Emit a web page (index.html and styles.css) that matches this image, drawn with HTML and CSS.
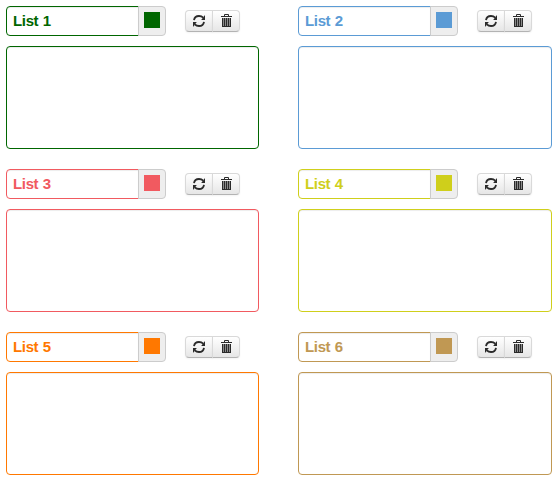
FILE: index.html
```
<!DOCTYPE html>
<html lang="en">
<head>
<meta charset="utf-8">
<title>Lists</title>
<link rel="stylesheet" href="styles.css">
</head>
<body>
<svg class="defs" width="0" height="0" aria-hidden="true">
  <symbol id="refresh" viewBox="0 0 14 14">
    <path d="M2 6.2C2.4 3.6 4.4 2 7 2c1.7 0 3 .5 4.2 1.7M12 7.8c-.4 2.6-2.4 4.2-5 4.2-1.7 0-3-.5-4.2-1.7" fill="none" stroke="#2a2a2a" stroke-width="1.8"/>
    <path d="M13 1v5H9.2zM1 13V8h3.8z" fill="#2a2a2a"/>
  </symbol>
  <symbol id="trash" viewBox="0 0 14 14">
    <path d="M5.5 2V.5h4V2" fill="none" stroke="#2a2a2a"/>
    <path d="M2 2h11v1H2zM3 4h9v9H3z" fill="#2a2a2a"/>
    <path d="M4.5 4v8M6.5 4v8M8.5 4v8M10.5 4v8" stroke="#8a8a8a"/>
  </symbol>
</svg>
<main class="lists">
  <section class="list green">
    <div class="bar">
      <input class="name" value="List 1"><span class="addon"><i class="swatch"></i></span>
      <div class="group"><button class="btn"><svg><use href="#refresh"/></svg></button><button class="btn"><svg><use href="#trash"/></svg></button></div>
    </div>
    <textarea class="items"></textarea>
  </section>
  <section class="list blue">
    <div class="bar">
      <input class="name" value="List 2"><span class="addon"><i class="swatch"></i></span>
      <div class="group"><button class="btn"><svg><use href="#refresh"/></svg></button><button class="btn"><svg><use href="#trash"/></svg></button></div>
    </div>
    <textarea class="items"></textarea>
  </section>
  <section class="list red">
    <div class="bar">
      <input class="name" value="List 3"><span class="addon"><i class="swatch"></i></span>
      <div class="group"><button class="btn"><svg><use href="#refresh"/></svg></button><button class="btn"><svg><use href="#trash"/></svg></button></div>
    </div>
    <textarea class="items"></textarea>
  </section>
  <section class="list yellow">
    <div class="bar">
      <input class="name" value="List 4"><span class="addon"><i class="swatch"></i></span>
      <div class="group"><button class="btn"><svg><use href="#refresh"/></svg></button><button class="btn"><svg><use href="#trash"/></svg></button></div>
    </div>
    <textarea class="items"></textarea>
  </section>
  <section class="list orange">
    <div class="bar">
      <input class="name" value="List 5"><span class="addon"><i class="swatch"></i></span>
      <div class="group"><button class="btn"><svg><use href="#refresh"/></svg></button><button class="btn"><svg><use href="#trash"/></svg></button></div>
    </div>
    <textarea class="items"></textarea>
  </section>
  <section class="list tan">
    <div class="bar">
      <input class="name" value="List 6"><span class="addon"><i class="swatch"></i></span>
      <div class="group"><button class="btn"><svg><use href="#refresh"/></svg></button><button class="btn"><svg><use href="#trash"/></svg></button></div>
    </div>
    <textarea class="items"></textarea>
  </section>
</main>
</body>
</html>
```
FILE: styles.css
```
* { box-sizing: border-box; }
body { margin: 0; background: #fff; font: 14px/20px "Liberation Sans", Arial, sans-serif; }
.defs { display: none; }
.lists { display: grid; grid-template-columns: 253px 254px; column-gap: 39px; row-gap: 20px; padding: 6px; }
.list { display: flex; flex-direction: column; gap: 10px; height: 143px; }
.green { color: #006600; }
.blue { color: #5b9bd5; }
.red { color: #f15a60; }
.yellow { color: #cfcf1b; }
.orange { color: #ff7800; }
.tan { color: #c09853; }
.bar { display: flex; height: 30px; }
.name {
  width: 133px; height: 30px; margin: 0; padding: 3px 6px 5px;
  border: 1px solid currentColor; border-radius: 4px 0 0 4px;
  color: inherit; background: #fff; font: bold 15px/20px "Liberation Sans", Arial, sans-serif;
  letter-spacing: -.35px; word-spacing: .6px;
  box-shadow: inset 0 1px 1px rgba(0, 0, 0, .075); outline: 0;
}
.addon {
  width: 28px; height: 30px; margin-left: -1px; padding: 5px;
  border: 1px solid #ccc; border-radius: 0 4px 4px 0; background: #eee; z-index: 1;
}
.swatch { display: block; width: 16px; height: 16px; background: currentColor; }
.group { display: flex; margin: 4px 0 0 19px; height: 22px; }
.btn {
  width: 28px; height: 22px; padding: 3px 6px;
  border: 1px solid; border-color: #d9d9d9 #d9d9d9 #b3b3b3;
  border-radius: 4px 0 0 4px; background: linear-gradient(#fff, #e6e6e6);
  box-shadow: inset 0 1px 0 rgba(255, 255, 255, .2), 0 1px 2px rgba(0, 0, 0, .05);
}
.btn + .btn { margin-left: -1px; border-radius: 0 4px 4px 0; }
.btn svg { display: block; width: 14px; height: 14px; }
.items {
  display: block; width: 100%; height: 103px; margin: 0; padding: 4px 6px;
  border: 1px solid currentColor; border-radius: 4px; color: inherit; background: #fff;
  box-shadow: inset 0 1px 1px rgba(0, 0, 0, .075); resize: none; outline: 0; overflow: auto;
}
```
